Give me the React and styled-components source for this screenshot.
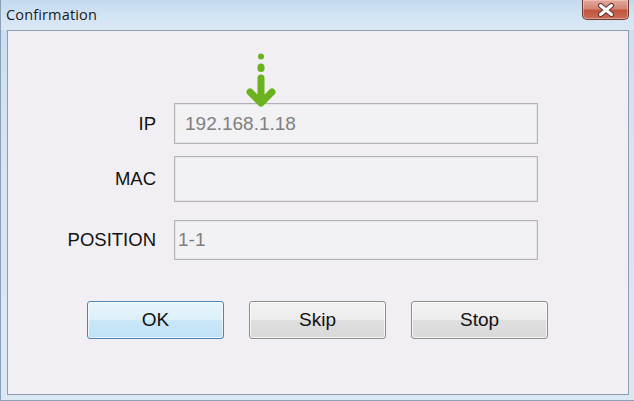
import React from "react";
import styled, { createGlobalStyle } from "styled-components";

const Global = createGlobalStyle`
  html, body { margin: 0; padding: 0; background: #dfe9f5; }
  #root { width: 634px; height: 401px; }
`;

const Window = styled.div`
  width: 634px;
  height: 401px;
  box-sizing: border-box;
  display: flex;
  flex-direction: column;
  background: linear-gradient(to bottom, #c9dcf0 0%, #d6e5f4 40%, #dbe7f3 100%);
  border: 1px solid #8a9fb8;
  border-top: none;
  border-right: none;
  font-family: "Liberation Sans", Arial, sans-serif;
  position: relative;
  overflow: hidden;
`;

const TitleBar = styled.div`
  height: 30px;
  flex: none;
  display: flex;
  align-items: flex-start;
  justify-content: space-between;
  padding-left: 5px;
  background: linear-gradient(to bottom, #c4d9ee 0%, #d2e3f3 50%, #dae8f5 100%);
`;

const Title = styled.span`
  font-family: "Open Sans", "Noto Sans", sans-serif;
  font-size: 14.5px;
  color: #1b1b1b;
  margin-top: 5px;
  letter-spacing: 0.15px;
`;

const CloseButton = styled.div`
  width: 47px;
  height: 20px;
  margin-right: 5px;
  box-sizing: border-box;
  border: 1px solid #6a3b33;
  border-top: none;
  border-radius: 0 0 5px 5px;
  background: linear-gradient(to bottom, #e3a89c 0%, #d48474 45%, #c0553f 55%, #cc6b55 100%);
  display: flex;
  align-items: center;
  justify-content: center;
  box-shadow: inset 0 0 0 1px rgba(255, 215, 205, 0.45);
`;

const Content = styled.div`
  flex: 1;
  margin: 0 5px 5px 6px;
  border: 1px solid #8d9db2;
  background: #f1eff3;
  position: relative;
  display: flex;
  flex-direction: column;
  padding-top: 72px;
`;

const Row = styled.div`
  display: grid;
  grid-template-columns: 148px 364px;
  column-gap: 18px;
  align-items: center;
  margin-bottom: ${(p) => p.$gap}px;
`;

const Label = styled.label`
  text-align: right;
  font-size: 18.5px;
  color: #111;
`;

const Field = styled.div`
  height: ${(p) => p.$h}px;
  box-sizing: border-box;
  border: 1px solid #b3b1b5;
  box-shadow: inset 0 0 0 1px #e6e5e8;
  background: #f2f1f4;
  display: flex;
  align-items: center;
  padding-left: ${(p) => p.$pad}px;
  font-size: 19px;
  color: #808080;
`;

const ButtonRow = styled.div`
  display: flex;
  gap: 25px;
  padding-left: 79px;
  margin-top: 41px;
`;

const Button = styled.div`
  width: 137px;
  height: 38px;
  box-sizing: border-box;
  border-radius: 3px;
  display: flex;
  align-items: center;
  justify-content: center;
  font-size: 19px;
  color: #111;
  border: 1px solid ${(p) => (p.$primary ? "#4a84b3" : "#8e8e8e")};
  background: ${(p) =>
    p.$primary
      ? "linear-gradient(to bottom, #e8f5fc 0%, #dcf0fa 50%, #c9e8f8 51%, #bfe2f5 100%)"
      : "linear-gradient(to bottom, #f3f3f3 0%, #ececec 50%, #dfdfdf 51%, #d9d9d9 100%)"};
  box-shadow: inset 0 0 0 1px rgba(255, 255, 255, 0.65);
`;

const Arrow = styled.svg`
  position: absolute;
  left: 232px;
  top: 20px;
`;

export default function App() {
  return (
    <>
      <Global />
      <Window>
        <TitleBar>
          <Title>Confirmation</Title>
          <CloseButton>
            <svg width="18" height="14" viewBox="0 0 18 14">
              <path
                d="M3.5 2.5 L14.5 11.5 M14.5 2.5 L3.5 11.5"
                stroke="#5a3530"
                strokeWidth="5"
                strokeLinecap="round"
              />
              <path
                d="M3.5 2.5 L14.5 11.5 M14.5 2.5 L3.5 11.5"
                stroke="#ffffff"
                strokeWidth="3"
                strokeLinecap="round"
              />
            </svg>
          </CloseButton>
        </TitleBar>
        <Content>
          <Arrow width="40" height="60" viewBox="0 0 40 60">
            <circle cx="21" cy="5.5" r="3" fill="#6cb21e" />
            <rect x="17.5" y="12.5" width="7" height="8.5" rx="3.5" fill="#6cb21e" />
            <path
              d="M21 27 L21 51 M10 41 L21 52 L32 41"
              stroke="#6cb21e"
              strokeWidth="7"
              fill="none"
              strokeLinecap="round"
              strokeLinejoin="round"
            />
          </Arrow>
          <Row $gap={12}>
            <Label>IP</Label>
            <Field $h={41} $pad={10}>192.168.1.18</Field>
          </Row>
          <Row $gap={18}>
            <Label>MAC</Label>
            <Field $h={46} $pad={10} />
          </Row>
          <Row $gap={0}>
            <Label>POSITION</Label>
            <Field $h={40} $pad={3}>1-1</Field>
          </Row>
          <ButtonRow>
            <Button $primary>OK</Button>
            <Button>Skip</Button>
            <Button>Stop</Button>
          </ButtonRow>
        </Content>
      </Window>
    </>
  );
}
